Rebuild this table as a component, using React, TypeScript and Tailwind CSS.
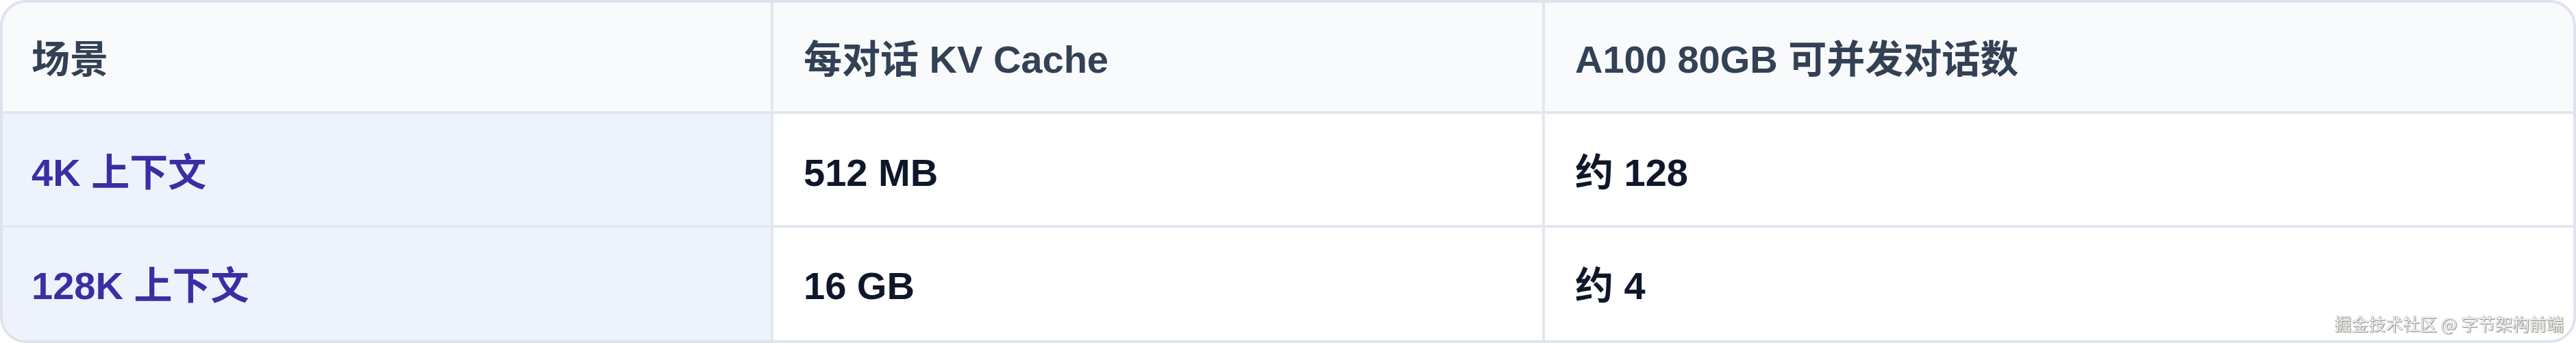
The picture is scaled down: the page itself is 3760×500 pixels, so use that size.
const font = {
  fontFamily:
    '"Liberation Sans", "Noto Sans CJK SC", sans-serif',
};

const rows = [
  { scene: "4K 上下文", cache: "512 MB", count: "约 128" },
  { scene: "128K 上下文", cache: "16 GB", count: "约 4" },
];

export default function App() {
  return (
    <div
      className="relative w-[3760px] h-[500px] overflow-hidden rounded-[38px] border-[4px] border-[#dfe3ee] bg-white"
      style={font}
    >
      <div className="grid grid-cols-[1125px_1126px_1fr]">
        {/* header */}
        <div className="flex h-[162px] items-center border-b-[4px] border-r-[4px] border-[#e2e6ef] bg-[#f8fafc] pl-[42px] pt-[8px] text-[56px] font-bold text-[#334155]">
          场景
        </div>
        <div className="flex h-[162px] items-center border-b-[4px] border-r-[4px] border-[#e2e6ef] bg-[#f8fafc] pl-[44px] pt-[8px] text-[56px] font-bold text-[#334155]">
          每对话 KV Cache
        </div>
        <div className="flex h-[162px] items-center border-b-[4px] border-[#e2e6ef] bg-[#f8fafc] pl-[44px] pt-[8px] text-[56px] font-bold text-[#334155]">
          A100 80GB 可并发对话数
        </div>

        {rows.map((r, i) => {
          const last = i === rows.length - 1;
          return [
            <div
              key={r.scene}
              className={
                last
                  ? "flex h-[164px] items-center border-r-[4px] border-[#e2e6ef] bg-[#eef2fd] pl-[42px] pt-[6px] text-[56px] font-bold text-[#3730a3]"
                  : "flex h-[166px] items-center border-b-[4px] border-r-[4px] border-[#e2e6ef] bg-[#eef2fd] pl-[42px] pt-[10px] text-[56px] font-bold text-[#3730a3]"
              }
            >
              {r.scene}
            </div>,
            <div
              key={r.cache}
              className={
                last
                  ? "flex h-[164px] items-center border-r-[4px] border-[#e2e6ef] pl-[44px] pt-[6px] text-[56px] font-bold text-[#0f172a]"
                  : "flex h-[166px] items-center border-b-[4px] border-r-[4px] border-[#e2e6ef] pl-[44px] pt-[10px] text-[56px] font-bold text-[#0f172a]"
              }
            >
              {r.cache}
            </div>,
            <div
              key={r.count}
              className={
                last
                  ? "flex h-[164px] items-center pl-[44px] pt-[6px] text-[56px] font-bold text-[#0f172a]"
                  : "flex h-[166px] items-center border-b-[4px] border-[#e2e6ef] pl-[44px] pt-[10px] text-[56px] font-bold text-[#0f172a]"
              }
            >
              {r.count}
            </div>,
          ];
        })}
      </div>

      {/* watermark */}
      <div className="absolute bottom-[12px] right-[14px] text-[25px] leading-none text-[#f2f2f2] [font-family:'Noto_Sans_CJK_SC',sans-serif] [text-shadow:0_0_1px_#555,1px_1px_1px_#888]">
        掘金技术社区 @ 字节架构前端
      </div>
    </div>
  );
}
